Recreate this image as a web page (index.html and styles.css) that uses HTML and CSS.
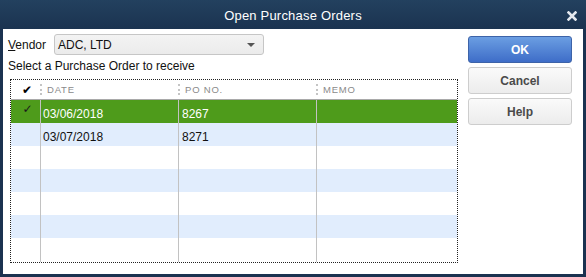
FILE: index.html
```html
<!DOCTYPE html>
<html>
<head>
<meta charset="utf-8">
<link rel="stylesheet" href="styles.css">
</head>
<body>
<div class="window">
  <div class="titlebar">
    <span class="title">Open Purchase Orders</span>
    <svg class="close" width="10" height="10" viewBox="0 0 10 10"><path d="M1.5 1.5 L8.5 8.5 M8.5 1.5 L1.5 8.5" stroke="#e4e8ee" stroke-width="2.6" stroke-linecap="square"/></svg>
  </div>
  <div class="content">
    <div class="main">
      <div class="vendor-row">
        <span class="label"><u>V</u>endor</span>
        <div class="select"><span>ADC, LTD</span><span class="arrow"></span></div>
      </div>
      <div class="hint">Select a Purchase Order to receive</div>
      <div class="grid">
        <div class="head">
          <div class="hcell hcheck">✔</div>
          <div class="hcell"><span class="sep"></span>DATE</div>
          <div class="hcell"><span class="sep"></span>PO NO.</div>
          <div class="hcell"><span class="sep"></span>MEMO</div>
        </div>
        <div class="row selected">
          <div class="cell ccheck">✓</div>
          <div class="cell line">03/06/2018</div>
          <div class="cell line">8267</div>
          <div class="cell line"></div>
        </div>
        <div class="row alt">
          <div class="cell ccheck"></div>
          <div class="cell line">03/07/2018</div>
          <div class="cell line">8271</div>
          <div class="cell line"></div>
        </div>
        <div class="row"><div class="cell ccheck"></div><div class="cell line"></div><div class="cell line"></div><div class="cell line"></div></div>
        <div class="row alt"><div class="cell ccheck"></div><div class="cell line"></div><div class="cell line"></div><div class="cell line"></div></div>
        <div class="row"><div class="cell ccheck"></div><div class="cell line"></div><div class="cell line"></div><div class="cell line"></div></div>
        <div class="row alt"><div class="cell ccheck"></div><div class="cell line"></div><div class="cell line"></div><div class="cell line"></div></div>
        <div class="row tall"><div class="cell ccheck"></div><div class="cell line"></div><div class="cell line"></div><div class="cell line"></div></div>
      </div>
    </div>
    <div class="buttons">
      <button class="btn primary">OK</button>
      <button class="btn">Cancel</button>
      <button class="btn">Help</button>
    </div>
  </div>
</div>
</body>
</html>
```
FILE: styles.css
```css
* { box-sizing: border-box; }
html, body { margin: 0; padding: 0; }
body {
  width: 586px;
  height: 277px;
  overflow: hidden;
  font-family: "Liberation Sans", Arial, sans-serif;
  font-size: 12px;
  color: #111;
}
.window {
  width: 586px;
  height: 277px;
  background: #1b3250;
  padding: 0 3px 3px 3px;
  display: flex;
  flex-direction: column;
}
.titlebar {
  height: 29px;
  flex: none;
  display: flex;
  align-items: center;
  justify-content: center;
  position: relative;
  background: linear-gradient(#23415f, #1b3350);
  margin: 0 -3px;
}
.title {
  color: #fff;
  font-size: 13px;
  letter-spacing: 0.2px;
  padding-top: 1px;
}
.close {
  position: absolute;
  right: 9px;
  top: 11px;
}
.content {
  flex: 1;
  background: #fff;
  display: flex;
  padding: 5px 11px 0 0;
}
.main {
  width: 465px;
  padding-left: 5px;
  display: flex;
  flex-direction: column;
}
.vendor-row {
  display: flex;
  align-items: center;
  height: 21px;
}
.label {
  width: 46px;
  font-size: 12px;
}
.select {
  width: 210px;
  height: 21px;
  border: 1px solid #c6c6c6;
  border-radius: 3px;
  background: linear-gradient(#f3f3f3, #ebebeb);
  display: flex;
  align-items: center;
  justify-content: space-between;
  padding: 0 8px 0 3px;
  font-size: 12px;
}
.arrow {
  width: 0;
  height: 0;
  border-left: 4px solid transparent;
  border-right: 4px solid transparent;
  border-top: 4px solid #555;
  margin-top: 1px;
}
.hint {
  margin-top: 4px;
  line-height: 14px;
  height: 14px;
  font-size: 12px;
}
.grid {
  margin-top: 6px;
  margin-left: 2px;
  width: 448px;
  height: 184px;
  border: 1px dotted #222;
  overflow: hidden;
}
.head, .row {
  display: grid;
  grid-template-columns: 29px 138px 138px 1fr;
}
.head {
  height: 20px;
  border-bottom: 1px solid #a9a9a9;
}
.hcell {
  display: flex;
  align-items: center;
  font-size: 9.5px;
  letter-spacing: 0.8px;
  color: #8a8a8a;
}
.hcheck {
  justify-content: center;
  font-family: "DejaVu Sans", sans-serif;
  font-size: 12px;
  color: #000;
  letter-spacing: 0;
  padding-left: 3px;
}
.sep {
  display: inline-block;
  width: 0;
  height: 11px;
  border-left: 2px dotted #c4c4c4;
  margin-right: 5px;
}
.row {
  height: 23px;
}
.row.tall { height: 30px; }
.row.alt { background: #e1edfd; }
.row.selected { background: #4e9b1b; color: #fff; }
.cell {
  font-size: 12px;
  padding-top: 7px;
  line-height: 15px;
  padding-left: 2px;
}
.cell.line {
  border-left: 1px solid #c2c2c2;
}
.cell.line + .cell.line { padding-left: 3px; }
.ccheck {
  font-family: "DejaVu Sans", sans-serif;
  font-size: 12px;
  color: #1a1a1a;
  text-align: center;
  padding-top: 3px;
  padding-left: 4px;
  line-height: 12px;
}
.buttons {
  width: 104px;
  margin-left: auto;
  display: flex;
  flex-direction: column;
  gap: 4px;
  padding-top: 2px;
}
.btn {
  height: 27px;
  width: 104px;
  border: 1px solid #cdcdcd;
  border-radius: 3px;
  background: linear-gradient(#fafafa, #ececec);
  font-family: "Liberation Sans", Arial, sans-serif;
  font-size: 12px;
  font-weight: bold;
  color: #4a4a4a;
  padding: 0;
}
.btn.primary {
  border-color: #3d63a8;
  background: linear-gradient(#6b9ee2, #3e6dc8);
  color: #fff;
}
```
